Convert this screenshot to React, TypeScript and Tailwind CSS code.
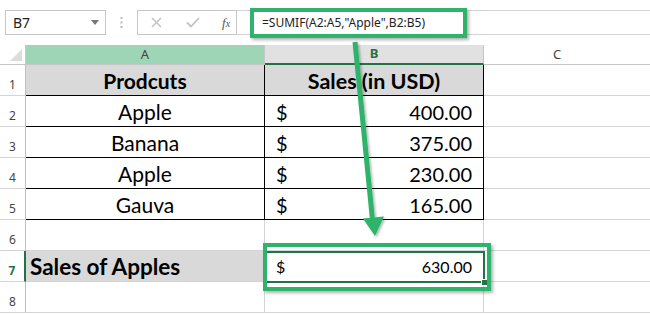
import React from "react";

const GREEN = "#2db36b";

type Row = {
    n: number
    a?: string
    b?: string
}

const rows: Row[] = [
    {n: 1, a: "Prodcuts", b: "Sales (in USD)"},
    {n: 2, a: "Apple", b: "400.00"},
    {n: 3, a: "Banana", b: "375.00"},
    {n: 4, a: "Apple", b: "230.00"},
    {n: 5, a: "Gauva", b: "165.00"},
    {n: 6},
    {n: 7, a: "Sales of Apples", b: "630.00"},
    {n: 8},
]

const FormulaBar = () => (
    <div className="flex h-[45px] items-start bg-white pt-[10px] pl-[5px]">
        <div className="flex h-[25px] w-[101px] items-center justify-between border border-[#c6c6c6] pl-[7px] pr-[6px] text-[14px] text-[#222]" style={{fontFamily: '"Noto Sans", sans-serif'}}>
            <span>B7</span>
            <svg width="8" height="5" viewBox="0 0 8 5"><path d="M0 0 L8 0 L4 5 Z" fill="#777" /></svg>
        </div>
        <div className="flex h-[25px] w-[31px] items-center justify-center">
            <svg width="3" height="11" viewBox="0 0 3 11">
                <rect x="0.5" y="0" width="2" height="2" fill="#b8b8b8" />
                <rect x="0.5" y="4.5" width="2" height="2" fill="#b8b8b8" />
                <rect x="0.5" y="9" width="2" height="2" fill="#b8b8b8" />
            </svg>
        </div>
        <div className="flex h-[25px] w-[100px] items-center border border-[#c6c6c6]">
            <svg className="ml-[13px]" width="11" height="11" viewBox="0 0 11 11">
                <path d="M1 1 L10 10 M10 1 L1 10" stroke="#c2c2c2" strokeWidth="1.5" />
            </svg>
            <svg className="ml-[24px]" width="14" height="11" viewBox="0 0 14 11">
                <path d="M1 5.5 L5 9.5 L13 1" stroke="#c2c2c2" strokeWidth="1.8" fill="none" />
            </svg>
            <span className="ml-[22px] text-[13px] italic text-[#555]" style={{fontFamily: '"Liberation Serif", serif'}}>
                f<span className="text-[10px]">x</span>
            </span>
        </div>
        <div className="flex h-[25px] flex-1 items-center border-y border-[#d4d4d4] pl-[25px] text-[12px] text-[#222]" style={{fontFamily: '"Noto Sans", sans-serif'}}>
            =SUMIF(A2:A5,"Apple",B2:B5)
        </div>
    </div>
)

const ColumnHeaders = () => (
    <div className="flex h-[20px] text-[13px]" style={{fontFamily: '"Noto Sans", sans-serif'}}>
        <div className="relative w-[26px] border-r border-b border-[#c6c6c6] bg-white">
            <svg className="absolute right-[3px] bottom-[3px]" width="12" height="12" viewBox="0 0 12 12"><path d="M12 0 L12 12 L0 12 Z" fill="#dcdcdc" /></svg>
        </div>
        <div className="flex w-[239px] items-center justify-center border-r border-b border-[#c6c6c6] bg-[#9fd5b7] text-[#444]">A</div>
        <div className="flex w-[219px] items-center justify-center border-r border-[#c6c6c6] border-b-2 border-b-[#217346] bg-[#e1e1e1] font-bold text-[#217346]">B</div>
        <div className="flex flex-1 items-center justify-center border-b border-[#c6c6c6] bg-white pr-[20px] text-[#444]">C</div>
    </div>
)

const GridRow = ({row}: {row: Row}) => {
    const inTable = row.n <= 5
    const header = row.n === 1
    const total = row.n === 7
    const line = inTable ? "border-black" : "border-[#d4d4d4]"

    return (
        <div className="flex h-[31px]" style={{fontFamily: 'Lato, "Open Sans", sans-serif'}}>
            <div
                className={`flex w-[26px] items-end justify-center border-b border-[#d4d4d4] bg-white pb-[4px] text-[12px] leading-none ${total ? "border-r-2 border-r-[#217346] font-bold text-[#217346]" : "border-r border-r-[#bfbfbf] text-[#444]"}`}
                style={{fontFamily: '"Noto Sans", sans-serif'}}
            >
                {row.n}
            </div>
            <div
                className={`flex w-[239px] items-end border-b border-r pb-[2px] leading-[24px] text-black ${line} ${header || total ? "bg-[#d9d9d9] font-bold" : "bg-white"} ${total ? "pl-[4px] text-[22.5px]" : "justify-center text-[21px]"}`}
            >
                {row.a}
            </div>
            <div
                className={`flex w-[219px] items-end border-b border-r pb-[2px] leading-[24px] text-black ${line} ${header ? "justify-center bg-[#d9d9d9] text-[21.5px] font-bold" : "justify-between bg-white pl-[11px] pr-[11px]"} ${total ? "text-[16px]" : header ? "" : "text-[20px]"}`}
            >
                {header ? row.b : row.b ? (
                    <>
                        <span>$</span>
                        <span>{row.b}</span>
                    </>
                ) : null}
            </div>
            <div className="flex-1 border-b border-[#d4d4d4] bg-white" />
        </div>
    )
}

const Overlay = () => (
    <>
        {/* formula highlight */}
        <div className="absolute left-[250px] top-[8px] h-[30px] w-[217px] border-4 border-[#2db36b] shadow-[2px_2px_3px_rgba(0,0,0,0.3)]" />
        {/* selected cell B7 */}
        <div className="absolute left-[266px] top-[251px] h-[32px] w-[219px] border-y-2 border-r-2 border-[#217346]" />
        <div className="absolute left-[482px] top-[280px] h-[5px] w-[5px] bg-[#217346] ring-1 ring-white" />
        <div className="absolute left-[263px] top-[243px] h-[48px] w-[228px] border-4 border-[#2db36b] shadow-[2px_2px_3px_rgba(0,0,0,0.3)]" />
        <svg className="pointer-events-none absolute left-0 top-0" width="650" height="314" viewBox="0 0 650 314">
            <defs>
                <filter id="sh" x="-20%" y="-20%" width="140%" height="140%">
                    <feDropShadow dx="1.5" dy="1.5" stdDeviation="1.2" floodColor="#000" floodOpacity="0.3" />
                </filter>
            </defs>
            <g filter="url(#sh)">
                <line x1="355" y1="42" x2="372.5" y2="220" stroke={GREEN} strokeWidth="5" />
                <path d="M375 236 L384 216.5 L363 218.5 Z" fill={GREEN} />
            </g>
        </svg>
    </>
)

export default function App() {
    return (
        <div className="relative h-[314px] w-[650px] overflow-hidden bg-white">
            <FormulaBar />
            <ColumnHeaders />
            {rows.map((row) => (
                <GridRow key={row.n} row={row} />
            ))}
            <Overlay />
        </div>
    )
}
